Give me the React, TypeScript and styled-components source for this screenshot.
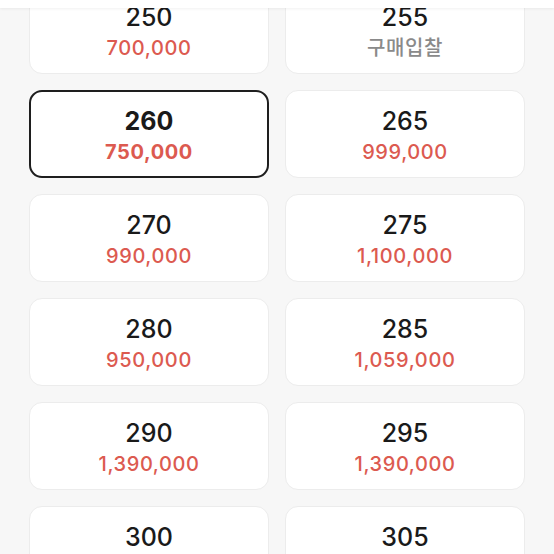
import React from "react";
import styled, { createGlobalStyle } from "styled-components";

const Global = createGlobalStyle`
  html, body { margin: 0; padding: 0; background: #f7f7f7; }
  body { font-family: "Inter", "Noto Sans CJK KR", sans-serif; -webkit-font-smoothing: antialiased; }
`;

const TopBar = styled.div`
  position: fixed;
  top: 0;
  left: 0;
  right: 0;
  height: 8px;
  background: #ffffff;
  box-shadow: 0 1px 3px rgba(0, 0, 0, 0.06);
  z-index: 10;
`;

const Page = styled.div`
  background: #f7f7f7;
  padding: 0 29px 40px;
  overflow: hidden;
`;

const Grid = styled.div`
  display: grid;
  grid-template-columns: 1fr 1fr;
  column-gap: 16px;
  row-gap: 16px;
  margin-top: -14px;
`;

const Card = styled.div<{ $selected?: boolean }>`
  box-sizing: border-box;
  height: 88px;
  padding-top: 4px;
  background: #ffffff;
  border: ${(p) => (p.$selected ? "2px solid #1e1e1e" : "1px solid #ececec")};
  border-radius: 13px;
  display: flex;
  flex-direction: column;
  align-items: center;
  justify-content: center;
  gap: 6px;
`;

const Size = styled.div<{ $selected?: boolean }>`
  font-size: 25px;
  line-height: 26px;
  font-weight: ${(p) => (p.$selected ? 700 : 500)};
  color: #1a1a1a;
`;

const Price = styled.div<{ $selected?: boolean; $muted?: boolean }>`
  font-size: 20px;
  line-height: 24px;
  letter-spacing: 0.6px;
  font-weight: ${(p) => (p.$selected ? 700 : 500)};
  color: ${(p) => (p.$muted ? "#8a8a8a" : "#dc5a50")};
`;

type Item = { size: string; price: string; muted?: boolean };

const items: Item[] = [
  { size: "250", price: "700,000" },
  { size: "255", price: "구매입찰", muted: true },
  { size: "260", price: "750,000" },
  { size: "265", price: "999,000" },
  { size: "270", price: "990,000" },
  { size: "275", price: "1,100,000" },
  { size: "280", price: "950,000" },
  { size: "285", price: "1,059,000" },
  { size: "290", price: "1,390,000" },
  { size: "295", price: "1,390,000" },
  { size: "300", price: "1,390,000" },
  { size: "305", price: "1,390,000" },
];

export default function App() {
  return (
    <>
      <Global />
      <TopBar />
      <Page>
        <Grid>
          {items.map((it) => {
            const sel = it.size === "260";
            return (
              <Card key={it.size} $selected={sel}>
                <Size $selected={sel}>{it.size}</Size>
                <Price $selected={sel} $muted={it.muted}>
                  {it.price}
                </Price>
              </Card>
            );
          })}
        </Grid>
      </Page>
    </>
  );
}
